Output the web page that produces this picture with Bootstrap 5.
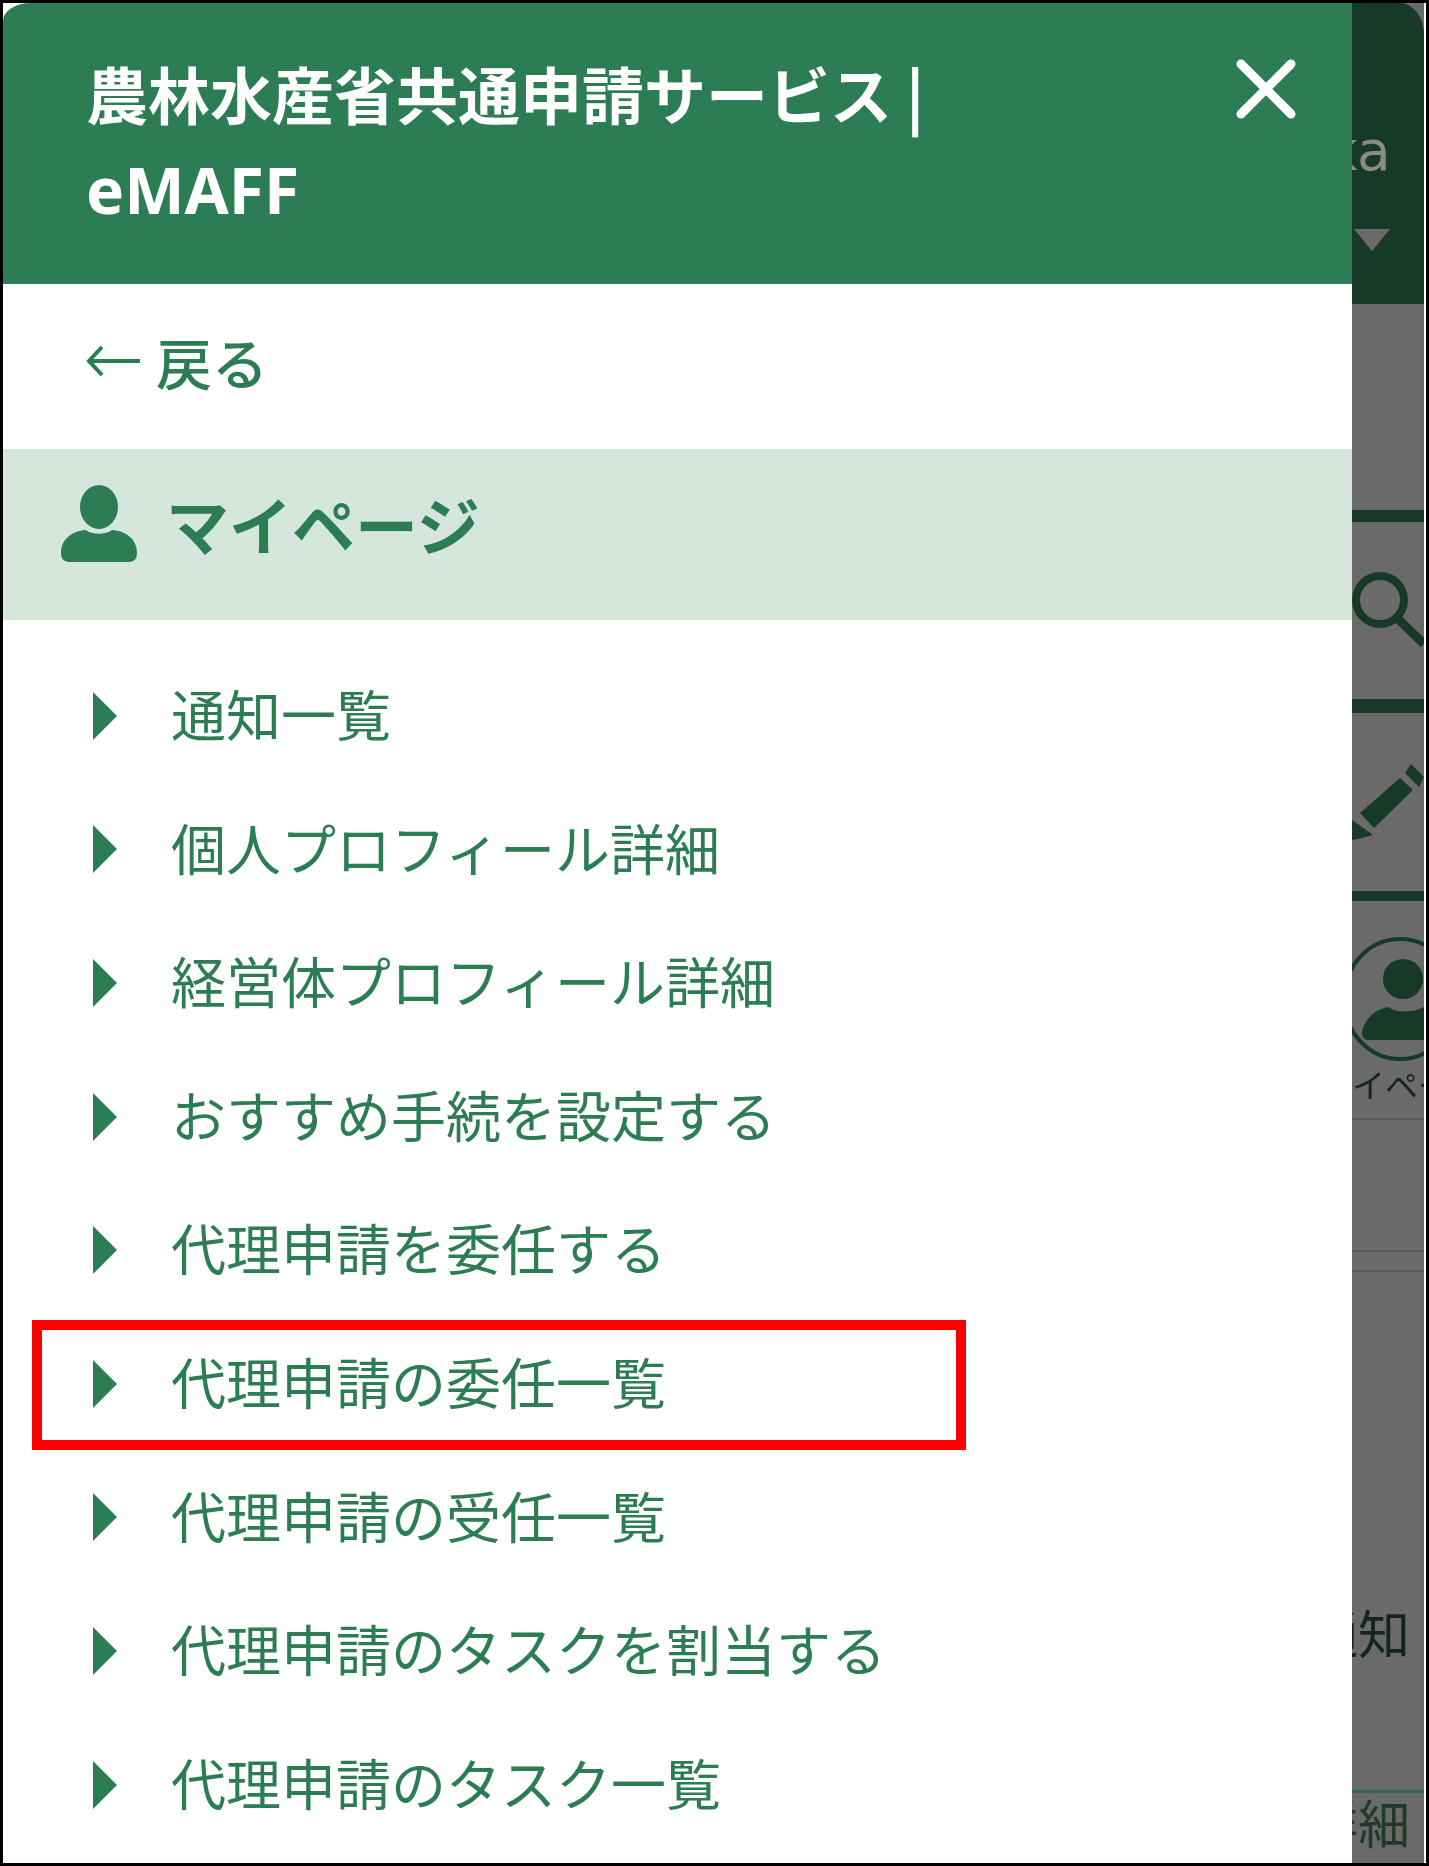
<!DOCTYPE html>
<html lang="ja">
<head>
  <meta charset="UTF-8">
  <meta name="viewport" content="width=device-width, initial-scale=1">
  <title>農林水産省共通申請サービス | eMAFF</title>
  <link href="https://cdn.jsdelivr.net/npm/bootstrap@5.3.0/dist/css/bootstrap.min.css" rel="stylesheet">
  <style>
    body { margin: 0; background: #fff; font-family: "Noto Sans CJK JP", "Noto Sans", sans-serif; }
    .shot-frame { width: 1429px; height: 1866px; border: 3px solid #000; background: #fff; overflow: hidden; padding-right: 2px; filter: blur(.7px); }

    /* drawer */
    .drawer { width: 1349px; flex: none; background: #fff; }
    .drawer-top { height: 281px; background: #2d7d54; color: #fff; padding: 43px 56px 0 83px; border-top-left-radius: 28px 18px; }
    .drawer-title { font-size: 62px; line-height: 94px; font-weight: 700; margin: 0; width: 1000px; }
    .title-latin { font-family: "Noto Sans", sans-serif; font-size: 64px; }
    .drawer-close { width: 60px; height: 60px; margin-top: 13px; padding: 0; border: 0; background: none; }
    .back-row { height: 165px; padding: 0 0 12px 83px; color: #2d7d54; font-size: 56px; font-weight: 500; text-decoration: none; }
    .back-arrow { width: 56px; height: 40px; margin-right: 14px; }
    .menu-head { height: 171px; background: #d5e6dd; padding: 0 0 22px 57px; color: #2d7d54; font-size: 63px; font-weight: 700; gap: 28px; }
    .menu-head svg { width: 78px; height: 78px; }
    .menu-items { padding: 29px 0 0 0; margin: 0; list-style: none; }
    .menu-item { height: 133.6px; padding-left: 90px; color: #2d7d54; font-size: 55px; }
    .menu-item a { color: inherit; text-decoration: none; margin-bottom: 7px; }
    .menu-arrow { width: 0; height: 0; margin-right: 54px; border-style: solid; border-width: 24px 0 24px 24px; border-color: transparent transparent transparent #2d7d54; }
    .red-mark { position: absolute; left: 29px; top: 3px; width: 934px; height: 130px; border: 10px solid #f00; pointer-events: none; }

    /* page behind the drawer, greyed out */
    .behind { flex: 1 1 auto; background: #6a6a6a; overflow: hidden; color: #14261c; }
    .behind-top { height: 301px; background: #163a27; border-top-right-radius: 24px 32px; color: #8b8b80; font-family: "DejaVu Sans", sans-serif; font-size: 55px; margin-bottom: 206px; padding-top: 116px; white-space: nowrap; }
    .behind-top span { display: block; line-height: 64px; margin-left: -26px; }
    .behind-caret { width: 0; height: 0; margin: 46px 0 0 2px; border-style: solid; border-width: 22px 18px 0 18px; border-color: #6a6a6a transparent transparent transparent; }
    .behind-cell { border-top: 12px solid #163a27; }
    .behind-cell svg { display: block; width: 72px; }
    .cell-search { height: 189px; }
    .cell-search svg { height: 177px; }
    .cell-pen { height: 192px; border-top-width: 14px; }
    .cell-pen svg { height: 178px; }
    .cell-user { height: 229px; border-top-width: 10px; border-bottom: 2px solid #5a5a5a; }
    .cell-user svg { height: 163px; }
    .cell-user span { display: block; font-size: 33px; line-height: 40px; margin-left: -33px; white-space: nowrap; }
    .cell-gap { height: 132px; border-bottom: 2px solid #5a5a5a; }
    .cell-gap2 { height: 20px; border-bottom: 2px solid #5a5a5a; }
    .cell-notice { height: 518px; padding-top: 330px; font-size: 52px; line-height: 60px; white-space: nowrap; }
    .cell-notice span, .cell-detail span { display: block; margin-left: -46px; }
    .cell-detail { height: 72px; border-top: 3px solid #2d6b4a; font-size: 52px; line-height: 58px; white-space: nowrap; color: #1d3a2a; }
  </style>
</head>
<body>
  <div class="shot-frame d-flex">
    <aside class="drawer">
      <div class="drawer-top d-flex justify-content-between align-items-start">
        <h5 class="drawer-title">農林水産省共通申請サービス | <span class="title-latin">eMAFF</span></h5>
        <button type="button" class="drawer-close" aria-label="閉じる">
          <svg width="60" height="60" viewBox="0 0 60 60"><path d="M5 5 L55 55 M55 5 L5 55" stroke="#fff" stroke-width="9" stroke-linecap="round"/></svg>
        </button>
      </div>
      <a class="back-row d-flex align-items-center" href="#">
        <svg class="back-arrow" viewBox="0 0 56 40"><path d="M54 20 H3 M16 6 L3 20 L16 34" fill="none" stroke="#2d7d54" stroke-width="4"/></svg>
        <span>戻る</span>
      </a>
      <div class="menu-head d-flex align-items-center">
        <svg viewBox="0 0 78 78"><ellipse cx="39" cy="22" rx="19" ry="22" fill="#2d7d54"/><path d="M1 68 C1 54 12 46 26 45 C32 50 46 50 52 45 C66 46 77 54 77 68 C77 75 73 77 68 77 H10 C5 77 1 75 1 68 Z" fill="#2d7d54"/></svg>
        <span>マイページ</span>
      </div>
      <ul class="menu-items">
        <li class="menu-item d-flex align-items-center"><i class="menu-arrow"></i><a href="#">通知一覧</a></li>
        <li class="menu-item d-flex align-items-center"><i class="menu-arrow"></i><a href="#">個人プロフィール詳細</a></li>
        <li class="menu-item d-flex align-items-center"><i class="menu-arrow"></i><a href="#">経営体プロフィール詳細</a></li>
        <li class="menu-item d-flex align-items-center"><i class="menu-arrow"></i><a href="#">おすすめ手続を設定する</a></li>
        <li class="menu-item d-flex align-items-center"><i class="menu-arrow"></i><a href="#">代理申請を委任する</a></li>
        <li class="menu-item d-flex align-items-center position-relative"><i class="menu-arrow"></i><a href="#">代理申請の委任一覧</a><div class="red-mark"></div></li>
        <li class="menu-item d-flex align-items-center"><i class="menu-arrow"></i><a href="#">代理申請の受任一覧</a></li>
        <li class="menu-item d-flex align-items-center"><i class="menu-arrow"></i><a href="#">代理申請のタスクを割当する</a></li>
        <li class="menu-item d-flex align-items-center"><i class="menu-arrow"></i><a href="#">代理申請のタスク一覧</a></li>
      </ul>
    </aside>
    <div class="behind">
      <div class="behind-top">
        <span>ka</span>
        <div class="behind-caret"></div>
      </div>
      <div class="behind-cell cell-search">
        <svg viewBox="0 0 72 177"><circle cx="28" cy="78" r="24" fill="none" stroke="#163a27" stroke-width="8"/><path d="M45 96 L72 122" stroke="#163a27" stroke-width="9"/></svg>
      </div>
      <div class="behind-cell cell-pen">
        <svg viewBox="0 0 72 178"><path d="M59 51 L72 64 L67 74 L53 60 Z" fill="#163a27"/><path d="M48 65 L61 77 L22 115 L8 100 Z" fill="#163a27"/><path d="M0 107 L21 122 L6 126 L0 127 Z" fill="#163a27"/></svg>
      </div>
      <div class="behind-cell cell-user">
        <svg viewBox="0 0 72 163"><ellipse cx="48" cy="98" rx="56" ry="60" fill="none" stroke="#163a27" stroke-width="4"/><circle cx="51" cy="78" r="20" fill="#163a27"/><path d="M10 132 C12 118 24 108 36 106 C44 112 60 112 72 106 V139 H16 C12 139 10 136 10 132 Z" fill="#163a27"/></svg>
        <span>マイページ</span>
      </div>
      <div class="cell-gap"></div>
      <div class="cell-gap2"></div>
      <div class="cell-notice"><span>通知</span></div>
      <div class="cell-detail"><span>詳細</span></div>
    </div>
  </div>
  <script src="https://cdn.jsdelivr.net/npm/bootstrap@5.3.0/dist/js/bootstrap.bundle.min.js"></script>
</body>
</html>
